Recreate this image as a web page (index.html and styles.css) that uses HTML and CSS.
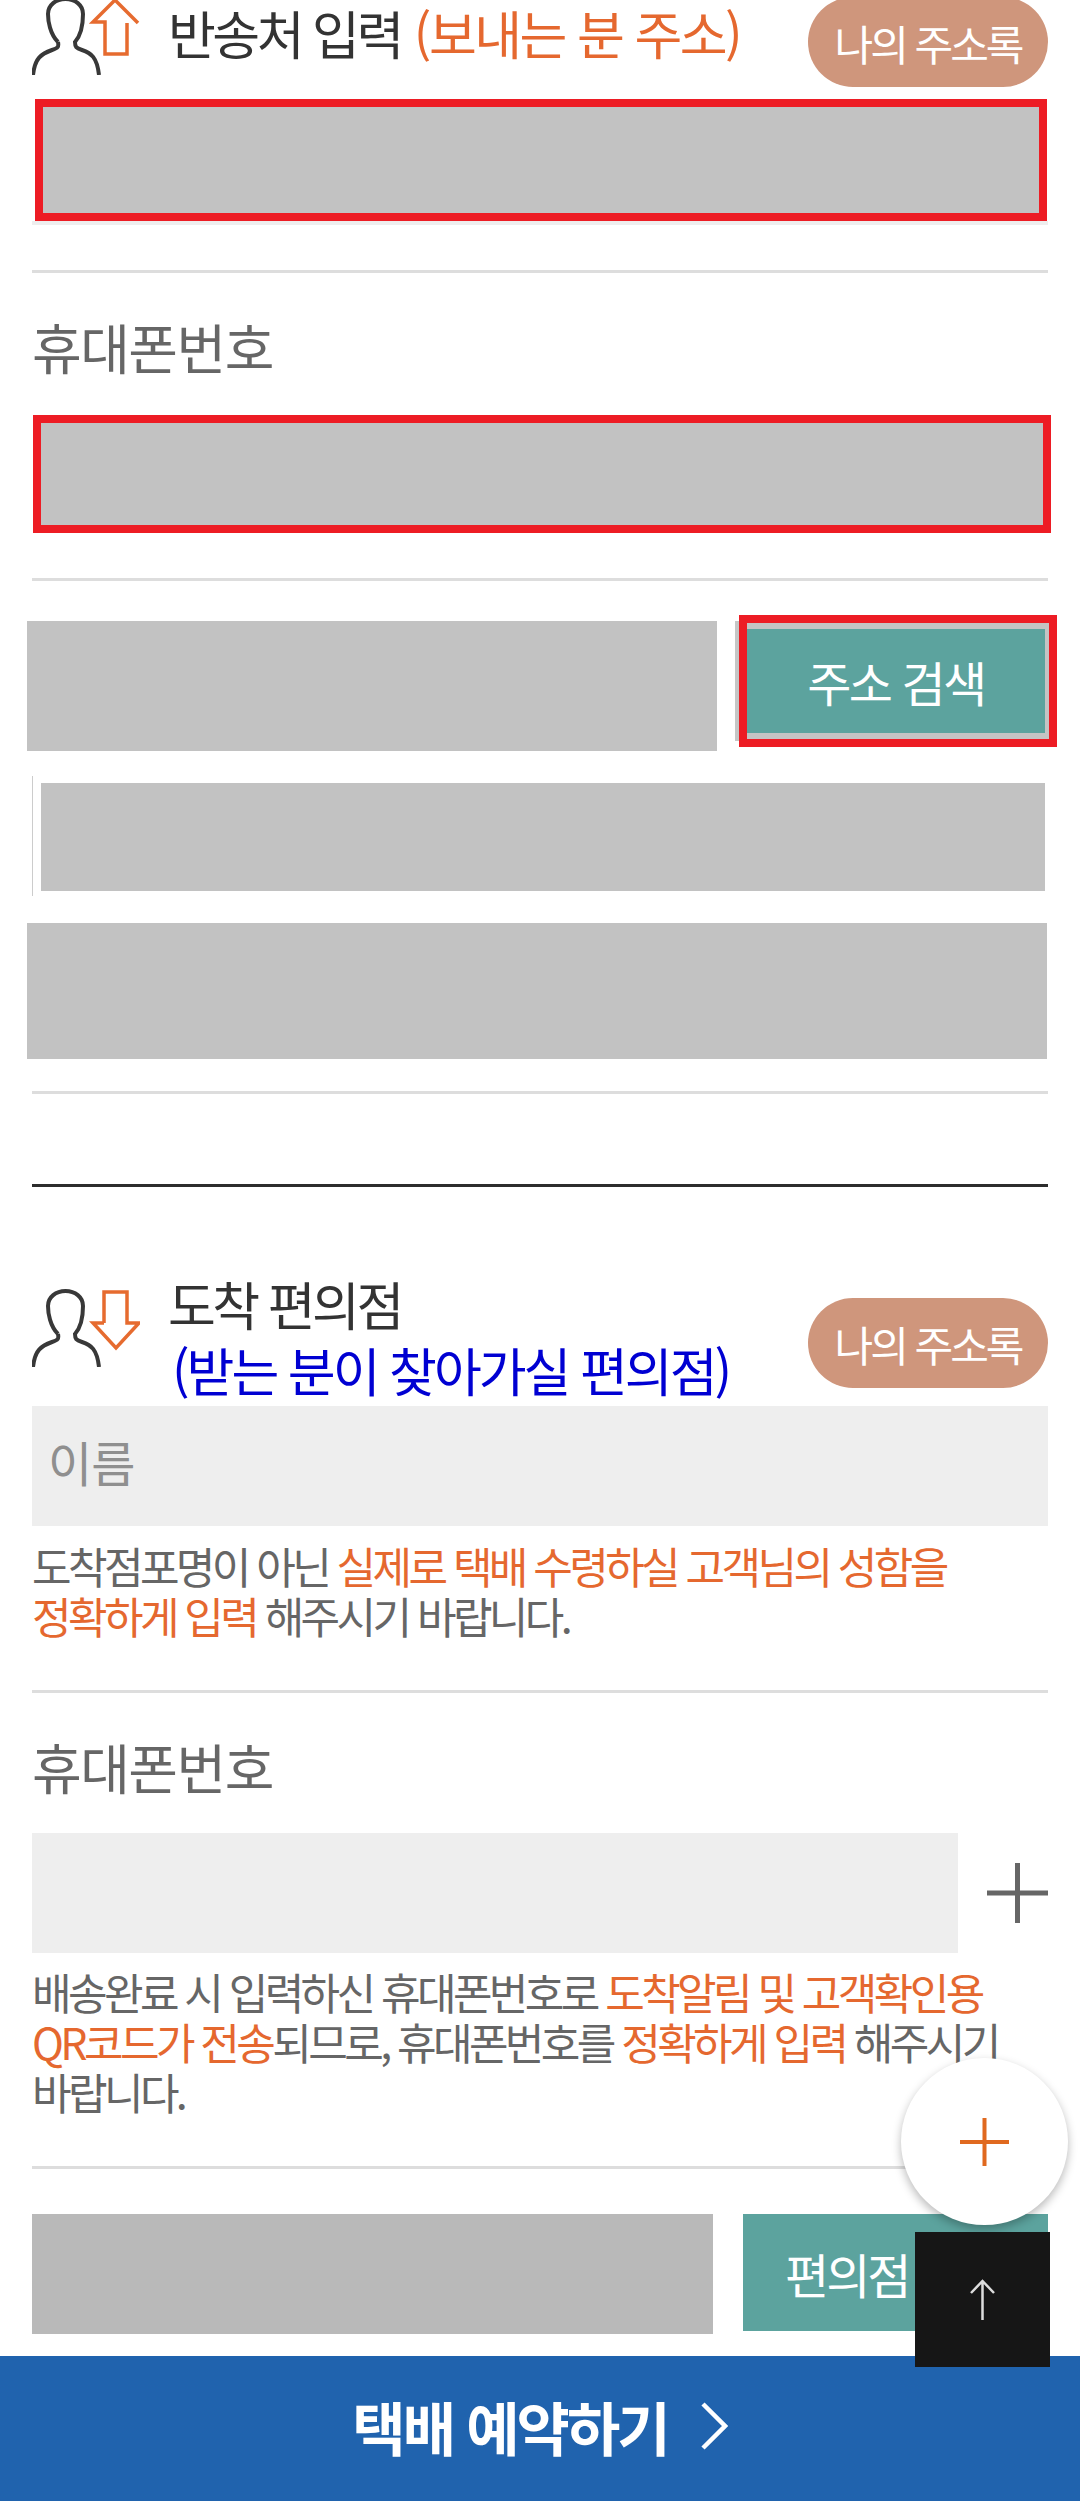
FILE: index.html
```html
<!DOCTYPE html>
<html lang="ko">
<head>
<meta charset="utf-8">
<title>택배 예약</title>
<link rel="stylesheet" href="styles.css">
</head>
<body>
<main class="page">
  <section class="head head-first">
    <svg class="head-icon" viewBox="0 0 108 78" aria-hidden="true">
      <path class="person" d="M26 45C18 37 16 24 16 17C16 8 24 2 33.5 2C43 2 51 8 51 17C51 24 50 37 43 45C43 50 44 51 50 53C59 56 65 60 67 78M26 45C27 50 26 51 20 53C9 57 3 61 1 78"/>
      <path class="arrow" d="M106 26L83 3L61 25H73V57H95V26"/>
    </svg>
    <h2 class="head-title">반송처 입력 <span class="orange head-note">(보내는 분 주소)</span></h2>
    <button class="pill">나의 주소록</button>
  </section>
  <div class="redact-box box-name"></div>
  <div class="input-edge"></div>
  <hr class="rule rule-a">
  <div class="label">휴대폰번호</div>
  <div class="redact-box box-phone"></div>
  <hr class="rule rule-b">
  <div class="search-row">
    <div class="grey postal"></div>
    <div class="sliver"></div>
    <div class="search-frame"><button class="search-btn">주소 검색</button></div>
  </div>
  <div class="addr-row"><div class="grey addr-fill"></div></div>
  <div class="grey addr-detail"></div>
  <hr class="rule rule-c">
  <hr class="rule-dark">

  <section class="head head-second">
    <svg class="head-icon" viewBox="0 0 108 78" aria-hidden="true">
      <path class="person" d="M26 45C18 37 16 24 16 17C16 8 24 2 33.5 2C43 2 51 8 51 17C51 24 50 37 43 45C43 50 44 51 50 53C59 56 65 60 67 78M26 45C27 50 26 51 20 53C9 57 3 61 1 78"/>
      <path class="arrow" d="M72 34V3H95V34H107L84 59L61 34H72"/>
    </svg>
    <h2 class="head-title">도착 편의점<br><span class="blue">(받는 분이 찾아가실 편의점)</span></h2>
    <button class="pill">나의 주소록</button>
  </section>
  <div class="input name-input">이름</div>
  <p class="note note-a">도착점포명이 아닌 <span class="orange">실제로 택배 수령하실 고객님의 성함을<br>정확하게 입력</span> 해주시기 바랍니다.</p>
  <hr class="rule rule-a">
  <div class="label">휴대폰번호</div>
  <div class="phone-row">
    <div class="input phone-input"></div>
    <svg class="add-icon" viewBox="0 0 61 60" aria-hidden="true"><path d="M30.5 0V60M0 30H61"/></svg>
  </div>
  <p class="note note-b">배송완료 시 입력하신 휴대폰번호로 <span class="orange">도착알림 및 고객확인용<br>QR코드가 전송</span>되므로, 휴대폰번호를 <span class="orange">정확하게 입력</span> 해주시기<br>바랍니다.</p>
  <hr class="rule rule-a">
  <div class="store-row">
    <div class="store-value"></div>
    <button class="store-btn">편의점</button>
  </div>
</main>

<button class="fab" aria-label="더보기">
  <svg viewBox="0 0 49 48" aria-hidden="true"><path d="M24.5 0V48M0 24H49"/></svg>
</button>
<button class="top-btn" aria-label="맨 위로">
  <svg viewBox="0 0 27 41" aria-hidden="true"><path d="M13.5 41V2M2 14L13.5 2L25 14"/></svg>
</button>
<footer class="book-bar">
  <span class="book-text">택배 예약하기</span>
  <svg class="book-chevron" viewBox="0 0 28 48" aria-hidden="true"><path d="M3 2L25 24L3 46"/></svg>
</footer>
</body>
</html>
```
FILE: styles.css
```css
* { box-sizing: border-box; }
html, body {
  margin: 0;
  padding: 0;
  width: 1080px;
  height: 2501px;
  overflow: hidden;
  background: #fff;
  font-family: "Noto Sans CJK KR", "Noto Sans", sans-serif;
  color: #333;
}
.page { padding: 0 32px; margin-top: -3px; position: relative; }
button { font-family: inherit; border: 0; padding: 0; margin: 0; }
hr { border: 0; margin: 0; }
h2, p { margin: 0; font-weight: 400; }

.head { display: flex; align-items: flex-start; }
.head-first { height: 102px; }
.head-second { height: 132px; margin-top: 87px; }
.head-second .head-icon { margin-top: 15px; }
.head-second .pill { margin-top: 24px; }
.head-second .head-title { margin-top: -3px; }
.head-icon { width: 108px; height: 78px; flex: none; fill: none; }
.person { stroke: #383838; stroke-width: 4; }
.arrow { stroke: #e66b2f; stroke-width: 3.5; }
.head-title {
  margin: 3px 0 0 28px;
  flex: 1;
  font-size: 52px;
  line-height: 66px;
  letter-spacing: -3.5px;
  color: #333;
  white-space: nowrap;
}
.orange { color: #e5682f; }
.head-note { letter-spacing: -2.5px; margin-left: 2px; }
.blue { color: #0000d2; margin-left: 4px; letter-spacing: -3px; }
.pill {
  flex: none;
  width: 240px;
  height: 90px;
  border-radius: 45px;
  background: #cf967c;
  color: #fff;
  font-size: 42px;
  letter-spacing: -3px;
  white-space: nowrap;
}

.redact-box { background: #c2c2c2; border: 8px solid #ed1c24; }
.box-name { height: 122px; margin: 0 1px 0 3px; }
.input-edge { height: 4px; background: #eee; }
.box-phone { height: 118px; margin: 37px -3px 0 1px; }

.rule { height: 3px; background: #ddd; }
.rule-a { margin-top: 45px; }
.rule-b { margin-top: 45px; }
.rule-c { margin-top: 32px; }
.rule-dark { height: 3px; background: #2d2d2d; margin-top: 90px; }

.label {
  margin-top: 45px;
  height: 60px;
  font-size: 54px;
  line-height: 58px;
  letter-spacing: -1.5px;
  color: #666;
}

.grey { background: #c2c2c2; }
.search-row { display: flex; align-items: flex-start; margin: 34px 0 0 -5px; height: 136px; }
.postal { width: 690px; height: 130px; margin-top: 6px; flex: none; }
.sliver { width: 4px; height: 120px; margin: 6px 0 0 18px; background: #c6c6c6; flex: none; }
.search-frame {
  flex: none;
  width: 318px;
  height: 132px;
  border: 8px solid #ed1c24;
  padding: 6px 4px 6px 0;
  background: #c4c4c4;
}
.search-btn {
  display: block;
  width: 100%;
  height: 100%;
  background: #5ca39e;
  color: #fff;
  font-size: 48px;
  letter-spacing: -2.5px;
}
.addr-row {
  margin-top: 25px;
  height: 120px;
  padding: 7px 3px 5px 8px;
  border-left: 1px solid #ccc;
}
.addr-fill { height: 108px; }
.addr-detail { height: 136px; margin: 27px 1px 0 -5px; }

.input { background: #eee; height: 120px; }
.name-input {
  padding-left: 16px;
  font-size: 48px;
  line-height: 111px;
  letter-spacing: -1px;
  color: #8f8f8f;
}
.note {
  font-size: 43px;
  line-height: 50px;
  letter-spacing: -3.6px;
  color: #666;
  white-space: nowrap;
}
.note-a { margin-top: 14px; }
.note-b { margin-top: 13px; }
.note-a + .rule-a { margin-top: 50px; }
.note-b + .rule-a { margin-top: 50px; }

.phone-row { display: flex; align-items: center; justify-content: space-between; margin-top: 35px; }
.phone-input { width: 926px; }
.add-icon { width: 61px; height: 60px; fill: none; stroke: #666; stroke-width: 5; }

.store-row { display: flex; align-items: flex-start; gap: 30px; margin-top: 45px; }
.store-value { width: 681px; height: 120px; background: #b9b9b9; flex: none; }
.store-btn {
  width: 305px;
  height: 117px;
  padding-left: 42px;
  background: #5ca39e;
  color: #fff;
  font-size: 48px;
  letter-spacing: -3px;
  text-align: left;
  flex: none;
}

.fab {
  position: absolute;
  left: 901px;
  top: 2058px;
  width: 167px;
  height: 167px;
  border-radius: 50%;
  background: #fff;
  box-shadow: 0 4px 10px rgba(0, 0, 0, .28);
  display: flex;
  align-items: center;
  justify-content: center;
}
.fab svg { width: 49px; height: 48px; fill: none; stroke: #e0691f; stroke-width: 4; }

.book-bar {
  position: absolute;
  left: 0;
  top: 2356px;
  width: 1080px;
  height: 145px;
  background: #2063ae;
  display: flex;
  align-items: center;
  justify-content: center;
  padding: 0 0 6px 0;
  color: #fff;
}
.book-text { font-size: 58px; line-height: 70px; font-weight: 700; letter-spacing: -3px; }
.book-chevron { width: 28px; height: 48px; margin-left: 32px; fill: none; stroke: #fff; stroke-width: 4.5; }

.top-btn {
  position: absolute;
  left: 915px;
  top: 2232px;
  width: 135px;
  height: 135px;
  background: #161616;
  display: flex;
  align-items: center;
  justify-content: center;
  z-index: 2;
}
.top-btn svg { width: 27px; height: 41px; fill: none; stroke: #ddd; stroke-width: 2.5; margin: 0 0 0 -1px; }
```
